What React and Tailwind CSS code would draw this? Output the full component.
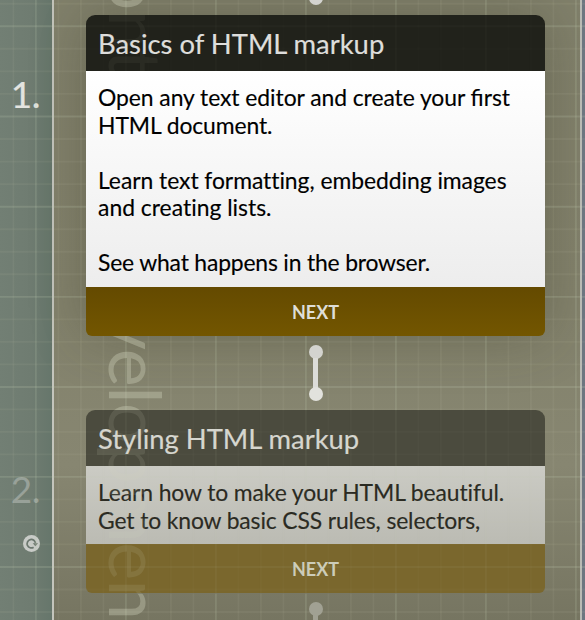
const columns = [-9, 13.4, 35.9, 58.4, 80.9, 103.4, 125.9, 148.4, 170.9, 193.4, 215.9, 238.4, 260.9, 283.4, 305.9, 328.4, 350.9, 373.4, 395.9, 418.4, 440.9, 463.4, 485.9, 508.4, 530.9, 553.4, 575.9];
const rows = [3.8, 26.3, 48.8, 71.4, 93.9, 116.5, 139, 161.6, 184.1, 206.7, 229.2, 251.8, 274.3, 296.9, 319.4, 341.9, 364.4, 387, 409.4, 431.9, 454.4, 476.9, 499.4, 521.9, 544.4, 567, 589.5, 612];

function Grid() {
  return (
    <svg className="pointer-events-none absolute inset-0 h-full w-full">
      {columns.map((x, i) => (
        <line key={"c" + x} x1={x} x2={x} y1="0" y2="620" stroke="#c6cdb4" strokeWidth="1.9" strokeOpacity={i % 4 === 2 ? 0.17 : 0.08} />
      ))}
      {rows.map((y, i) => (
        <line key={"r" + y} x1="0" x2="585" y1={y} y2={y} stroke="#c6cdb4" strokeWidth="1.9" strokeOpacity={i % 4 === 1 ? 0.19 : 0.08} />
      ))}
    </svg>
  );
}

function Backdrop({ className }) {
  return (
    <div className={`pointer-events-none absolute inset-0 ${className}`}>
      <Grid />
      <div className="absolute top-[-92px] left-[173px] origin-top-left rotate-90 text-[72px] leading-[72px] tracking-[-0.4px] whitespace-nowrap text-[#d5d8bf]/35">
        Front-end development
      </div>
    </div>
  );
}

function Connector() {
  return (
    <div className="flex h-[56px] flex-col items-center">
      <div className="h-[14px] w-[14px] rounded-full bg-[#d3d3cf]" />
      <div className="-my-px h-[30px] w-[5px] bg-[#dcdcd8]" />
      <div className="h-[14px] w-[14px] rounded-full bg-[#e2e2dd]" />
    </div>
  );
}

function Card({ title, children, className, headClass, bodyClass, buttonClass }) {
  return (
    <section className={`w-[459px] shrink-0 ${className}`}>
      <h2 className={`h-[56px] rounded-t-[9px] pl-[12px] text-[27.4px] leading-[58px] [-webkit-text-stroke:0.2px] ${headClass}`}>{title}</h2>
      <div className={`pl-[12px] text-[22.9px] leading-[27.5px] whitespace-nowrap [-webkit-text-stroke:0.15px] ${bodyClass}`}>{children}</div>
      <button className={`block h-[49px] w-full rounded-b-[6px] pt-[2px] text-[18px] font-bold ${buttonClass}`}>
        NEXT
      </button>
    </section>
  );
}

export default function App() {
  return (
    <div className="relative flex h-[620px] w-[585px] overflow-hidden bg-[#7f7d68] font-['Lato',sans-serif]">
      <aside className="flex w-[52px] shrink-0 flex-col items-end bg-[linear-gradient(90deg,#727f74,#6f7c71_60%,#66766b)]">
        <div className="mt-[71px] mr-[12px] text-[37px] leading-[46px] tracking-[-0.5px] text-[#e3e4e0] [-webkit-text-stroke:0.2px]">1.</div>
        <div className="mt-[349px] mr-[12px] text-[37px] leading-[46px] tracking-[-0.5px] text-[#98a199]">2.</div>
        <svg className="mt-[23px] mr-[12px] h-[17px] w-[17px]" viewBox="0 0 17 17">
          <circle cx="8.5" cy="8.5" r="8.5" fill="#c8cbc7" />
          <path d="M10.6 12.2A4.2 4.2 0 1 1 12.5 8.4" stroke="#6b776e" strokeWidth="1.7" fill="none" />
          <path d="M9.7 8.3H15L12.4 11.3Z" fill="#6b776e" />
        </svg>
      </aside>
      <div className="w-[2px] shrink-0 bg-[#c4c5bc]" />
      <main className="flex w-[529px] shrink-0 flex-col items-center bg-[linear-gradient(180deg,#81806b,#83826c_50%,#878671_75%,#767561)] pr-[6px]">
        <div className="relative z-10 -mt-[9px] h-[14px] w-[14px] shrink-0 rounded-full bg-[#d3d3cf]" />
        <Card
          title="Basics of HTML markup"
          className="mt-[10px] rounded-[9px] shadow-[0_0_55px_0_rgba(50,50,30,0.32)]"
          headClass="bg-[#21221b] text-[#dededc]"
          bodyClass="h-[216px] bg-linear-to-b from-white to-[#ededed] pt-[13px] text-black"
          buttonClass="bg-linear-to-b from-[#644a00] to-[#735600] text-[#deded8]"
        >
          <p className="tracking-[-0.06px]">Open any text editor and create your <span className="[font-variant-ligatures:common-ligatures] tracking-normal">first</span></p>
          <p className="tracking-[-0.1px]">HTML document.</p>
          <p className="mt-[27.5px] tracking-[-0.05px] [font-variant-ligatures:none]">Learn text formatting, embedding images</p>
          <p className="[font-variant-ligatures:none]">and creating lists.</p>
          <p className="mt-[27.5px] tracking-[-0.18px]">See what happens in the browser.</p>
        </Card>
        <div className="relative z-10 mt-[9px] mb-[9px]">
          <Connector />
        </div>
        <Card
          title="Styling HTML markup"
          className=""
          headClass="bg-[#4b4b3e] text-[#d6d6cf]"
          bodyClass="h-[78px] bg-linear-to-b from-[#cbcbc4] to-[#bbbbb3] pt-[13px] text-[#2a2a22]"
          buttonClass="bg-[#7a672d] text-[#ccccb9]"
        >
          <p className="tracking-[-0.11px] [font-variant-ligatures:none]">Learn how to make your HTML beautiful.</p>
          <p className="tracking-[-0.13px]">Get to know basic CSS rules, selectors,</p>
        </Card>
        <div className="relative z-10 mt-[9px] h-[14px] w-[14px] shrink-0 rounded-full bg-[#a1a193]" />
        <div className="-mt-px h-[30px] w-[5px] shrink-0 bg-[#a1a193]" />
      </main>
      <div className="-ml-[3px] w-[2px] shrink-0 bg-[#b9bab4]" />
      <div className="flex-1 bg-[#6d7680]" />
      <Backdrop className="[clip-path:polygon(0_0,585px_0,585px_336px,545px_336px,545px_15px,86px_15px,86px_336px,585px_336px,585px_594px,545px_594px,545px_410px,86px_410px,86px_594px,585px_594px,585px_620px,0_620px)]" />
      <Backdrop className="opacity-35 [clip-path:polygon(86px_410px,545px_410px,545px_594px,86px_594px)]" />
      <Backdrop className="opacity-15 [clip-path:polygon(86px_15px,545px_15px,545px_71px,86px_71px)]" />
    </div>
  );
}
